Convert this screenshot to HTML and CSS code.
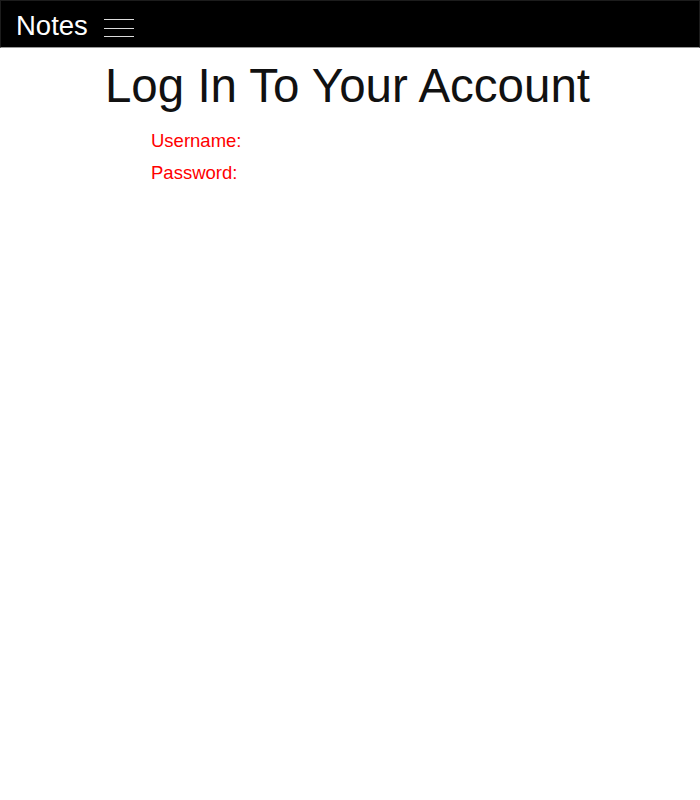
FILE: index.html
```html
<!DOCTYPE html>
<html lang="en">
<head>
<meta charset="utf-8">
<title>Notes</title>
<link rel="stylesheet" href="styles.css">
</head>
<body>
<header class="topbar">
  <span class="brand">Notes</span>
  <span class="menu" aria-label="Menu">
    <span class="menu-line"></span>
    <span class="menu-line"></span>
    <span class="menu-line"></span>
  </span>
</header>
<main class="login">
  <h1 class="title">Log In To Your Account</h1>
  <form class="form">
    <label class="field">Username:</label>
    <label class="field">Password:</label>
  </form>
</main>
</body>
</html>
```

FILE: styles.css
```css
html, body {
  margin: 0;
  padding: 0;
  background: #fff;
  font-family: "Liberation Sans", Arial, Helvetica, sans-serif;
}

.topbar {
  box-sizing: border-box;
  height: 48px;
  background: #000;
  border: 1px solid #1c1c1c;
  border-bottom: 1px solid #9a9a9a;
  display: flex;
  align-items: center;
  padding-left: 15px;
  gap: 16px;
}

.brand {
  color: #fff;
  font-size: 27.5px;
  line-height: 1;
  margin-top: 3px;
}

.menu {
  display: flex;
  flex-direction: column;
  gap: 7.5px;
  width: 30px;
  margin-top: 8px;
}

.menu-line {
  display: block;
  height: 1px;
  background: #dcdcdc;
}

.login {
  padding-top: 11px;
}

.title {
  margin: 0;
  text-align: center;
  font-weight: normal;
  font-size: 47.5px;
  line-height: 1.15;
  color: #111;
  padding-right: 5px;
}

.form {
  display: flex;
  flex-direction: column;
  padding-left: 151px;
  margin-top: 11px;
}

.field {
  color: #ff0000;
  font-size: 18.5px;
  line-height: 32px;
}
```
